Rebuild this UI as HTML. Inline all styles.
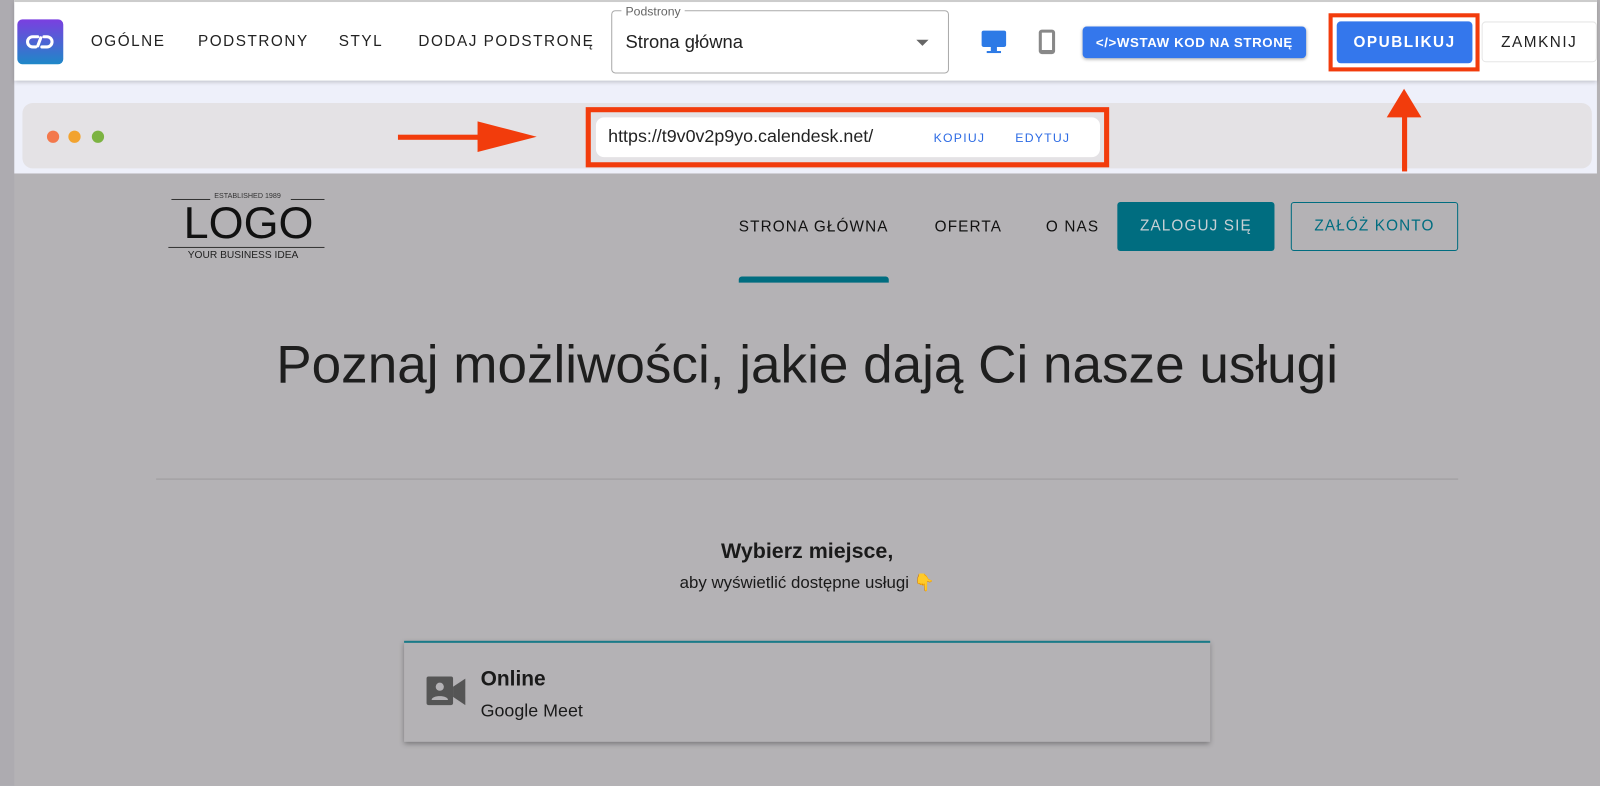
<!DOCTYPE html>
<html><head><meta charset="utf-8"><style>
*{box-sizing:border-box;margin:0;padding:0}
body{width:1600px;height:770px;overflow:hidden;background:#b4b2b5;font-family:"Liberation Sans",sans-serif;position:relative}
#w{position:absolute;left:0;top:0;width:1568px;height:755px;transform:scale(1.0204);transform-origin:0 0}
.a{position:absolute}
.nav{font-size:15px;letter-spacing:1.5px;color:#222;top:32px}
</style></head><body><div id="w">
<div class="a" style="left:0;top:0;width:14px;height:770px;background:#adabb0"></div>
<div class="a" style="left:14px;top:0;width:1551px;height:170px;background:#eef0fa"></div>
<div class="a" style="left:14px;top:0;width:1551px;height:79px;background:#fff;box-shadow:0 2px 4px rgba(0,0,0,.2);border-top:2px solid #ccc"></div>
<div class="a" style="left:17px;top:19px;width:45px;height:44px;border-radius:5px;background:linear-gradient(#7b3fe0,#1e88c8)"></div>
<svg class="a" style="left:25px;top:33px" width="28" height="16" viewBox="0 0 28 16"><path d="M12 3H7a5 5 0 0 0 0 10h3M16 13h5a5 5 0 0 0 0-10h-3M15 4l-3 8" stroke="#fff" stroke-width="3" fill="none" stroke-linecap="round"/></svg>
<div class="a nav" style="left:89px">OGÓLNE</div>
<div class="a nav" style="left:194px">PODSTRONY</div>
<div class="a nav" style="left:332px">STYL</div>
<div class="a nav" style="left:410px">DODAJ PODSTRONĘ</div>
<div class="a" style="left:599px;top:10px;width:331px;height:62px;border:1px solid #aaa;border-radius:4px"></div>
<div class="a" style="left:609px;top:4px;background:#fff;padding:0 4px;font-size:12px;color:#666">Podstrony</div>
<div class="a" style="left:613px;top:31px;font-size:18px;color:#222">Strona główna</div>
<div class="a" style="left:898px;top:39px;border:6px solid transparent;border-top:6px solid #666;border-bottom:0"></div>
<svg class="a" style="left:961px;top:29px" width="26" height="24" viewBox="0 0 26 24"><rect x="1" y="1" width="24" height="16" rx="2" fill="#2d7ae6"/><rect x="10" y="17" width="6" height="4" fill="#2d7ae6"/><rect x="6" y="21" width="14" height="2" fill="#2d7ae6"/></svg>
<svg class="a" style="left:1017px;top:28px" width="18" height="26" viewBox="0 0 18 26"><rect x="1" y="1" width="16" height="24" rx="3" fill="#888"/><rect x="4" y="4" width="10" height="17" fill="#fff"/></svg>
<div class="a" style="left:1061px;top:26px;width:219px;height:31px;background:#3477ec;border-radius:4px;color:#fff;font-size:13px;font-weight:bold;letter-spacing:.6px;text-align:center;line-height:31px;box-shadow:0 1px 3px rgba(0,0,0,.3)">&lt;/&gt;WSTAW KOD NA STRONĘ</div>
<div class="a" style="left:1302px;top:13px;width:148px;height:57px;border:4px solid #f23c0c"></div>
<div class="a" style="left:1310px;top:21px;width:133px;height:41px;background:#3477ec;border-radius:4px;color:#fff;font-size:15px;font-weight:bold;letter-spacing:1.5px;text-align:center;line-height:41px">OPUBLIKUJ</div>
<div class="a" style="left:1452px;top:21px;width:113px;height:40px;border:1px solid #e6e6e6;border-radius:4px;font-size:15px;letter-spacing:1.5px;text-align:center;line-height:40px;color:#222">ZAMKNIJ</div>
<div class="a" style="left:22px;top:101px;width:1538px;height:64px;background:#e4e2e5;border-radius:10px"></div>
<div class="a" style="left:46px;top:128px;width:12px;height:12px;border-radius:50%;background:#f3784c"></div>
<div class="a" style="left:67px;top:128px;width:12px;height:12px;border-radius:50%;background:#f2a32f"></div>
<div class="a" style="left:90px;top:128px;width:12px;height:12px;border-radius:50%;background:#7cb342"></div>
<div class="a" style="left:390px;top:132px;width:80px;height:5px;background:#f23c0c"></div>
<div class="a" style="left:468px;top:119px;border-left:58px solid #f23c0c;border-top:15px solid transparent;border-bottom:15px solid transparent"></div>
<div class="a" style="left:574px;top:105px;width:513px;height:59px;border:5px solid #f23c0c"></div>
<div class="a" style="left:584px;top:115px;width:494px;height:39px;background:#fff;border-radius:8px"></div>
<div class="a" style="left:596px;top:123px;font-size:17.5px;color:#222">https://t9v0v2p9yo.calendesk.net/</div>
<div class="a" style="left:915px;top:128px;font-size:12px;color:#2d6be4;letter-spacing:1.2px">KOPIUJ</div>
<div class="a" style="left:995px;top:128px;font-size:12px;color:#2d6be4;letter-spacing:1.2px">EDYTUJ</div>
<div class="a" style="left:1374px;top:110px;width:5px;height:58px;background:#f23c0c"></div>
<div class="a" style="left:1359px;top:87px;border-bottom:28px solid #f23c0c;border-left:17px solid transparent;border-right:17px solid transparent"></div>
<!-- site -->
<div class="a" style="left:168px;top:195px;width:38px;height:1px;background:#333"></div>
<div class="a" style="left:285px;top:195px;width:33px;height:1px;background:#333"></div>
<div class="a" style="left:210px;top:189px;font-size:7px;color:#333">ESTABLISHED 1989</div>
<div class="a" style="left:180px;top:196px;font-size:44px;color:#111;line-height:46px">LOGO</div>
<div class="a" style="left:165px;top:242px;width:153px;height:1px;background:#333"></div>
<div class="a" style="left:184px;top:245px;font-size:10px;color:#222">YOUR BUSINESS IDEA</div>
<div class="a" style="left:724px;top:214px;font-size:15px;letter-spacing:1.1px;color:#111">STRONA GŁÓWNA</div>
<div class="a" style="left:916px;top:214px;font-size:15px;letter-spacing:1.1px;color:#111">OFERTA</div>
<div class="a" style="left:1025px;top:214px;font-size:15px;letter-spacing:1.1px;color:#111">O NAS</div>
<div class="a" style="left:724px;top:271px;width:147px;height:6px;background:#006d80;border-radius:3px 3px 0 0"></div>
<div class="a" style="left:1095px;top:198px;width:154px;height:48px;background:#006d80;border-radius:3px;color:#c8d0d4;font-size:15px;letter-spacing:1.1px;text-align:center;line-height:48px">ZALOGUJ SIĘ</div>
<div class="a" style="left:1265px;top:198px;width:164px;height:48px;border:1px solid #006d80;border-radius:3px;color:#006d80;font-size:15px;letter-spacing:1.1px;text-align:center;line-height:46px">ZAŁÓŻ KONTO</div>
<div class="a" style="left:0;width:1582px;top:328px;text-align:center;font-size:52px;color:#1e1e1e">Poznaj możliwości, jakie dają Ci nasze usługi</div>
<div class="a" style="left:153px;top:469px;width:1276px;height:1px;background:#9c9a9d"></div>
<div class="a" style="left:0;width:1582px;top:529px;text-align:center;font-size:21px;font-weight:bold;color:#1a1a1a">Wybierz miejsce,</div>
<div class="a" style="left:0;width:1582px;top:562px;text-align:center;font-size:16.5px;color:#1a1a1a">aby wyświetlić dostępne usługi <span style="color:#d9a53c">👇</span></div>
<div class="a" style="left:396px;top:628px;width:790px;height:99px;border-top:2px solid #1a7a88;background:#b4b2b5;box-shadow:0 2px 5px rgba(0,0,0,.35)"></div>
<svg class="a" style="left:418px;top:663px" width="40" height="30" viewBox="0 0 40 30"><rect x="0" y="0" width="26" height="28" rx="2" fill="#555"/><path d="M26 10l12-8v26l-12-8z" fill="#555"/><circle cx="13" cy="10" r="4" fill="#b4b2b5"/><path d="M5 23c0-5 16-5 16 0z" fill="#b4b2b5"/></svg>
<div class="a" style="left:471px;top:654px;font-size:20.5px;font-weight:bold;color:#1a1a1a">Online</div>
<div class="a" style="left:471px;top:686px;font-size:17.5px;color:#1a1a1a">Google Meet</div>
</div></body></html>
